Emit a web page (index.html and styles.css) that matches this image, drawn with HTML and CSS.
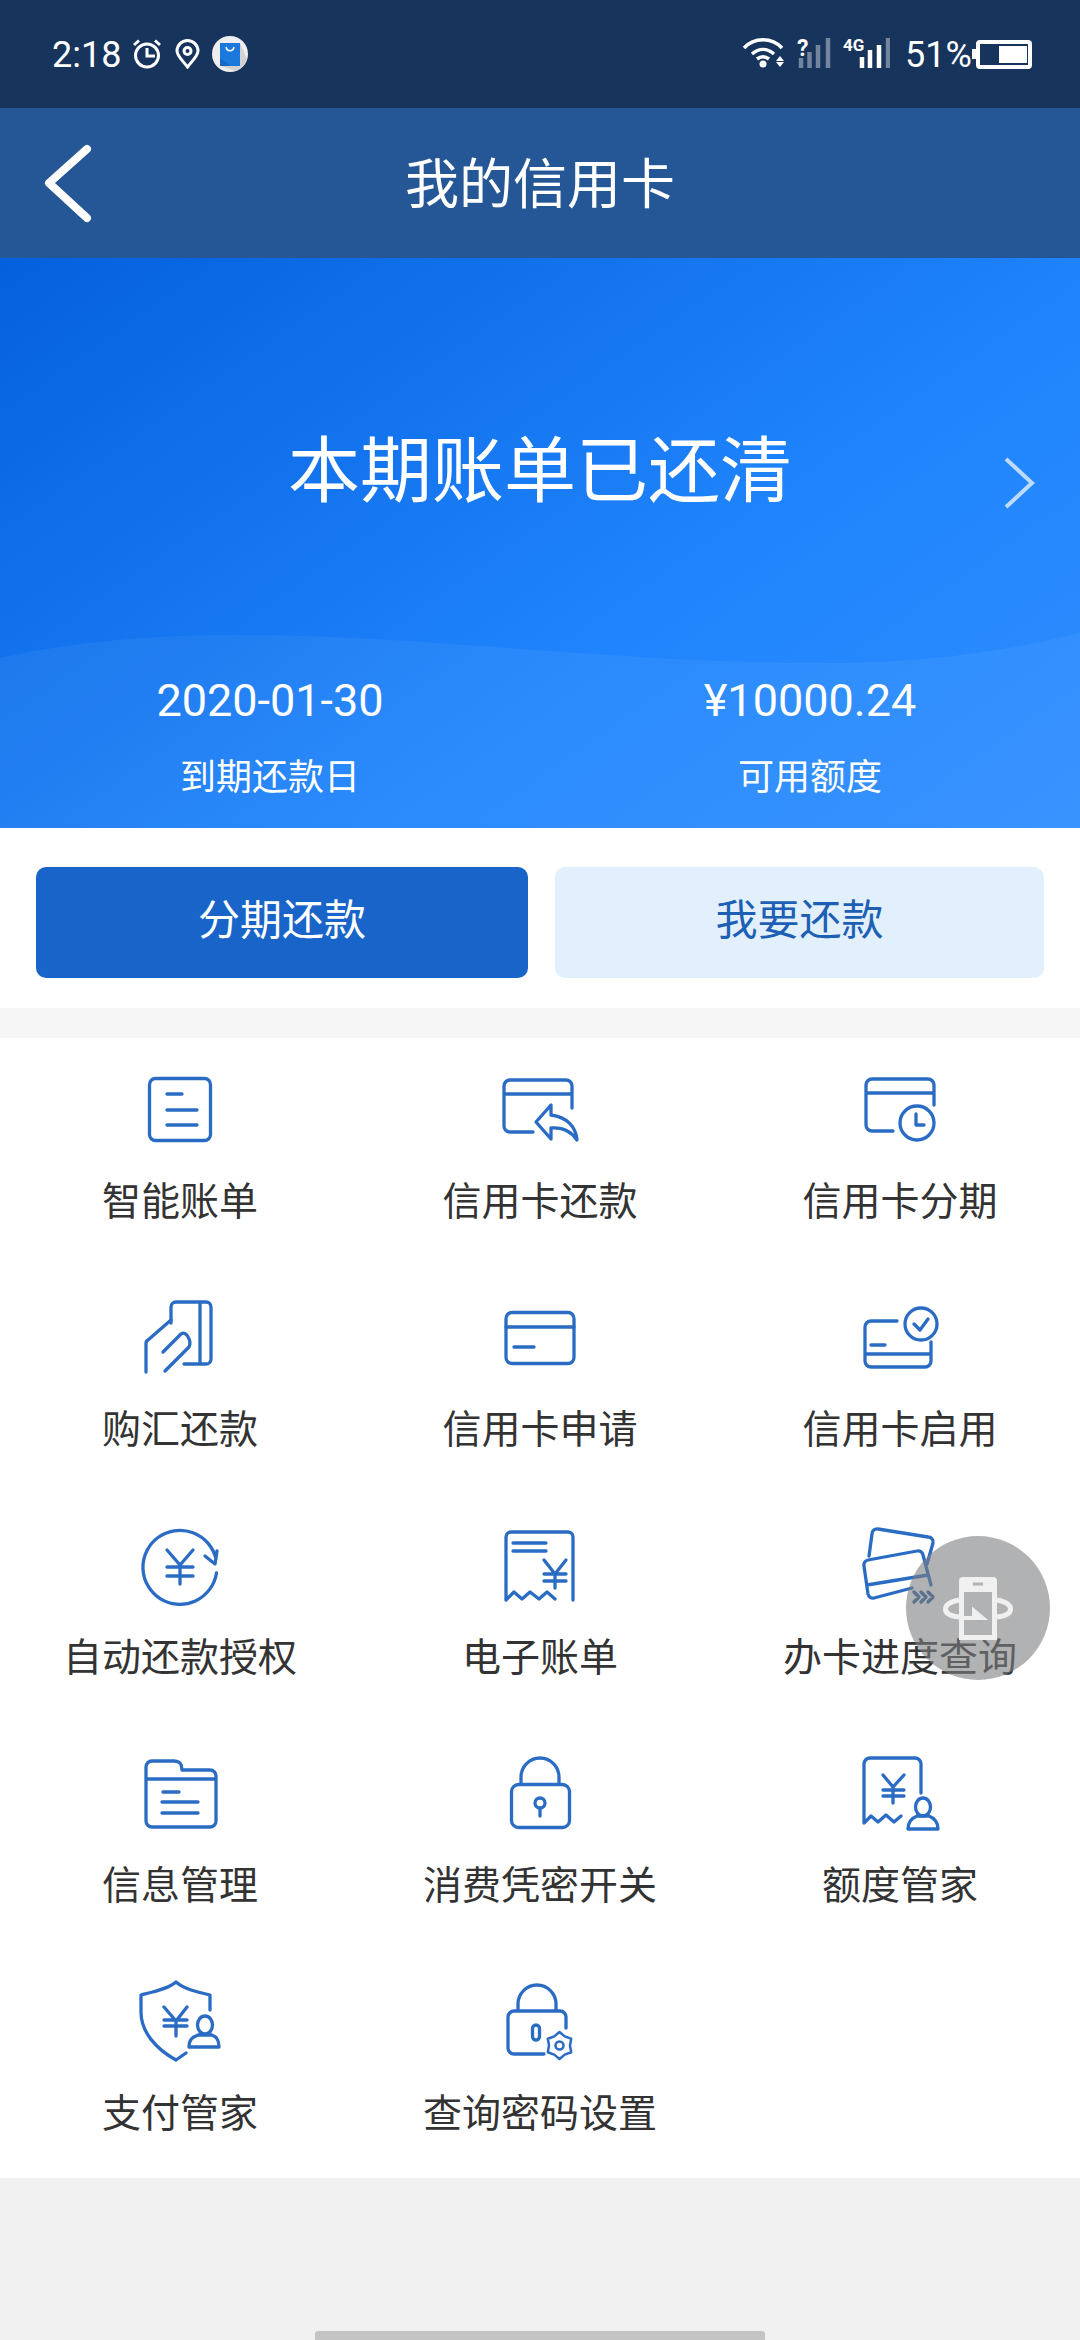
FILE: index.html
```html
<!DOCTYPE html>
<html lang="zh-CN">
<head>
<meta charset="UTF-8">
<meta name="viewport" content="width=device-width, initial-scale=1.0">
<title>我的信用卡</title>
<link rel="stylesheet" href="styles.css">
</head>
<body>
<div class="page">

    <div class="status-bar">
        <div class="status-left">
            <span class="status-time">2:18</span>
            <svg class="st-alarm" viewBox="0 0 30 30"><circle cx="15" cy="16.500" r="11.500"/><path d="M15 9v8h8M2 6l5-4.500M28 6l-5-4.500"/></svg>
            <svg class="st-pin" viewBox="0 0 25 30"><path d="M12.500 28C8 22 2 17 2 12a10.500 10.500 0 0 1 21 0C23 17 17 22 12.500 28Z"/><circle cx="12.500" cy="12" r="3.500"/></svg>
            <svg class="st-app" viewBox="0 0 36 36"><circle class="app-bg" cx="18" cy="18" r="18"/><path class="app-long" d="M28 7l7 16a18 18 0 0 1-11 12L8 30Z"/><path class="app-bag" d="M8 7h20v23H8Z"/><path class="app-shade" d="M8 22l11 8H8Z"/><path class="app-handle" d="M14 11c1 5 7 5 8 0"/></svg>
        </div>
        <div class="status-right">
            <svg class="st-net" viewBox="0 0 150 40">
                <path class="wifi-arc" d="M4 14C14 3 32 3 42 14M12 20c7-6 15-6 22 0M17 25c4-3 8-3 12 0"/>
                <circle class="solid" cx="23" cy="30" r="3.500"/>
                <path class="solid" d="M40 22l4 5h-8ZM40 33l4-5h-8Z"/>
                <path class="bar-off" d="M61 34V24M69.500 34V18M78 34V11M88 34V4"/>
                <path class="bar-on" d="M122 34V23M130 34V16M139 34V11"/>
                <path class="bar-off" d="M148 34V4"/>
                <text class="net-q" x="57" y="22">?</text>
                <text class="net-4g" x="103" y="17">4G</text>
            </svg>
            <span class="status-batt">51%</span>
            <div class="battery"><div class="battery-fill"></div></div>
        </div>
    </div>

    <div class="nav-bar">
        <svg class="back" viewBox="0 0 50 80"><path d="M45 6 7 40l38 35"/></svg>
        <span>我的信用卡</span>
    </div>

    <div class="hero">
        <svg class="wave" viewBox="0 0 1080 570"><path d="M0 400C80 382 160 377 241 377 420 377 620 405 826 405 930 405 1010 392 1080 375V570H0Z"/></svg>
        <svg class="hero-arrow" viewBox="0 0 32 54"><path d="M3 3l26 24L3 51"/></svg>
        <h1 class="hero-title">本期账单已还清</h1>
        <div class="hero-stats">
            <div class="stat">
                <div class="stat-value">2020-01-30</div>
                <div class="stat-label">到期还款日</div>
            </div>
            <div class="stat">
                <div class="stat-value">¥10000.24</div>
                <div class="stat-label">可用额度</div>
            </div>
        </div>
    </div>

    <div class="actions">
        <div class="btn btn-primary">分期还款</div>
        <div class="btn btn-light">我要还款</div>
    </div>

    <div class="gap"></div>

    <div class="menu">
        <div class="cell">
            <svg class="icon" viewBox="0 0 90 90"><rect x="14.500" y="13.500" width="61" height="62" rx="6"/><path d="M32 29h15M32 45h30M32 60h30"/></svg>
            <div class="cell-label">智能账单</div>
        </div>
        <div class="cell">
            <svg class="icon" viewBox="0 0 90 90"><path d="M38 67H15a6 6 0 0 1-6-6V21a6 6 0 0 1 6-6h56a6 6 0 0 1 6 6v22M9 29h68"/><path d="M56 40v10c16 2 25 12 26 25-6-9-14-13-26-12v11L41 57Z"/></svg>
            <div class="cell-label">信用卡还款</div>
        </div>
        <div class="cell">
            <svg class="icon" viewBox="0 0 90 90"><path d="M38 66H17a6 6 0 0 1-6-6V20a6 6 0 0 1 6-6h56a6 6 0 0 1 6 6v20M11 28h68"/><circle cx="62" cy="58" r="17"/><path d="M61 49v11h8"/></svg>
            <div class="cell-label">信用卡分期</div>
        </div>

        <div class="cell">
            <svg class="icon" viewBox="0 0 90 90"><path d="M36 30V14a5 5 0 0 1 5-5h30a5 5 0 0 1 5 5v52a5 5 0 0 1-5 5H49M65 9v62"/><path d="M36 27 13 47a4 4 0 0 0-2 4v28M30 78 54 54c3-6-3-17-8-13L28 59"/></svg>
            <div class="cell-label">购汇还款</div>
        </div>
        <div class="cell">
            <svg class="icon" viewBox="0 0 90 90"><rect x="11" y="19.500" width="68" height="51" rx="6"/><path d="M11 34h68M19 54h20"/></svg>
            <div class="cell-label">信用卡申请</div>
        </div>
        <div class="cell">
            <svg class="icon" viewBox="0 0 90 90"><path d="M42 28H16a6 6 0 0 0-6 6v34a6 6 0 0 0 6 6h54a6 6 0 0 0 6-6V49M10 61h66M16 52h14"/><circle cx="66" cy="31" r="16"/><path d="M59 31l6 6 8-11"/></svg>
            <div class="cell-label">信用卡启用</div>
        </div>

        <div class="cell">
            <svg class="icon" viewBox="0 0 90 90"><path d="M81.500 52A37 37 0 1 1 81 38M70 35l10 8 2-13"/><path d="M32 29l13 15 13-15M32 46h26M32 55h26M45 44v19"/></svg>
            <div class="cell-label">自动还款授权</div>
        </div>
        <div class="cell">
            <svg class="icon" viewBox="0 0 90 90"><path d="M11 79V16a5 5 0 0 1 5-5h57a5 5 0 0 1 5 5v63M11 79l8-8 8 7 8-7 9 7 8-7 8 7"/><path d="M18 22h33M18 30h33M49 39l11 14 11-14M49 53h22M49 60h22M60 53v14"/></svg>
            <div class="cell-label">电子账单</div>
        </div>
        <div class="cell">
            <svg class="icon" viewBox="0 0 90 90"><path d="M14 35l3-22a5 5 0 0 1 6-5l50 8a5 5 0 0 1 5 6l-6 21"/><path d="M57 67 19 77a5 5 0 0 1-6-4L9 45a5 5 0 0 1 4-6l49-9a5 5 0 0 1 6 4l8 30M12 64l61-10"/><path class="chev" d="M59 71l5 5-5 5M66 71l5 5-5 5M73 71l5 5-5 5"/></svg>
            <div class="cell-label">办卡进度查询</div>
        </div>

        <div class="cell">
            <svg class="icon" viewBox="0 0 90 90"><path d="M11 30V18a6 6 0 0 1 6-6h22c6 0 8 3 8 9h28a6 6 0 0 1 6 6v45a6 6 0 0 1-6 6H17a6 6 0 0 1-6-6Zm0 0h70M28 43h16M27 53h36M27 64h36"/></svg>
            <div class="cell-label">信息管理</div>
        </div>
        <div class="cell">
            <svg class="icon" viewBox="0 0 90 90"><rect x="16.500" y="35.500" width="58" height="43" rx="7"/><path d="M26 35V28a19 19 0 0 1 38 0v7M45 59v8"/><circle cx="45" cy="54" r="5"/></svg>
            <div class="cell-label">消费凭密开关</div>
        </div>
        <div class="cell">
            <svg class="icon" viewBox="0 0 90 90"><path d="M66 44V15a6 6 0 0 0-6-6H15a6 6 0 0 0-6 6v59l7-7 7 6 8-7 8 7 7-6"/><path d="M28 26l10 12 11-12M28 41h21M28 47h21M38 38v16"/><ellipse cx="68" cy="58" rx="7.500" ry="9"/><path d="M53 80c0-8 4-11 9-13h12c5 2 9 5 9 13Z"/></svg>
            <div class="cell-label">额度管家</div>
        </div>

        <div class="cell">
            <svg class="icon" viewBox="0 0 90 90"><path d="M75 33V18C62 15 49 12 41 5 33 12 18 15 6 18v17c0 20 15 37 35 48l10-7"/><path d="M29 30l12 14 11-14M29 43h23M29 49h23M41 44v15"/><ellipse cx="70" cy="48" rx="7.500" ry="9"/><path d="M54 70c0-8 4-10 9-12h14c5 2 7 5 7 12Z"/></svg>
            <div class="cell-label">支付管家</div>
        </div>
        <div class="cell">
            <svg class="icon" viewBox="0 0 90 90"><path d="M49 77H19a6 6 0 0 1-6-6V40a6 6 0 0 1 6-6h46a6 6 0 0 1 6 6v11M23 34v-7a19 19 0 0 1 38 0v7"/><rect x="37.500" y="48" width="7" height="15" rx="3.500"/><path class="gear" d="M64.500 55l5.250 4.400 6.450 2.350L75 68.500l1.200 6.750-6.450 2.350L64.500 82l-5.250-4.400-6.450-2.350L54 68.500l-1.200-6.750 6.450-2.350Z"/><circle class="gear" cx="64.500" cy="68.500" r="4"/></svg>
            <div class="cell-label">查询密码设置</div>
        </div>
    </div>

    <div class="footer"><div class="home-bar"></div></div>

    <div class="float-btn">
        <svg viewBox="0 0 144 144">
            <path class="fb-ring" d="M53 64C43 66 39.500 69 39.500 73s3.500 7 13.500 8M91 64c10 2 13.500 5 13.500 9s-3.500 7-13.500 8"/>
            <path class="fb-phone" d="M53 45a4 4 0 0 1 4-4h30a4 4 0 0 1 4 4v59H53Zm5 11v43h28V56Z"/>
            <path class="fb-speaker" d="M67 48h10"/>
            <path class="fb-arrow" d="M66 70.500 82 84H58v-4h8Z"/>
        </svg>
    </div>

</div>
</body>
</html>
```

FILE: styles.css
```css
* {
    box-sizing: border-box;
}
body {
    margin: 0;
    font-family: Roboto, "Noto Sans CJK SC", sans-serif;
}
.page {
    position: relative;
    width: 1080px;
    height: 2340px;
    overflow: hidden;
    display: flex;
    flex-direction: column;
    background: #f1f1f1;
}

/* status bar */
.status-bar {
    height: 108px;
    flex: none;
    padding: 0 48px 0 52px;
    display: flex;
    justify-content: space-between;
    align-items: center;
    background: #17345d;
    color: #fff;
}
.status-left, .status-right {
    display: flex;
    align-items: center;
}
.status-time {
    font-size: 36px;
    width: 80px;
    line-height: 36px;
    padding-top: 2px;
}
.status-bar svg {
    fill: none;
    stroke: #fff;
    stroke-width: 3;
}
.st-alarm {
    width: 30px;
    height: 30px;
    margin-right: 13px;
}
.st-pin {
    width: 25px;
    height: 30px;
    margin-right: 12px;
}
.st-app {
    width: 36px;
    height: 36px;
}
.status-bar .app-bg {
    fill: #eeeeee;
    stroke: none;
}
.status-bar .app-long {
    fill: #d2d2d2;
    stroke: none;
}
.status-bar .app-bag {
    fill: #1b79dd;
    stroke: none;
}
.status-bar .app-shade {
    fill: #1668c4;
    stroke: none;
}
.status-bar .app-handle {
    stroke-width: 1.500;
}
.st-net {
    width: 150px;
    height: 40px;
    margin-right: 15px;
}
.status-bar .wifi-arc {
    stroke-width: 3.500;
}
.status-bar .solid {
    fill: #fff;
    stroke: none;
}
.status-bar .bar-on {
    stroke-width: 4.500;
}
.status-bar .bar-off {
    stroke: rgba(255, 255, 255, 0.4);
    stroke-width: 4.500;
}
.status-bar .net-q, .status-bar .net-4g {
    fill: #fff;
    stroke: none;
    font-weight: 700;
}
.net-q {
    font-size: 23px;
}
.net-4g {
    font-size: 17px;
}
.status-batt {
    font-size: 36px;
    line-height: 36px;
    width: 71px;
    padding-top: 2px;
}
.battery {
    position: relative;
    width: 56px;
    height: 29px;
    border: 4px solid #fff;
    border-radius: 4px;
    padding: 2px 1px 2px 19px;
}
.battery::before {
    content: "";
    position: absolute;
    left: -8px;
    top: 5px;
    width: 4px;
    height: 10px;
    background: #fff;
}
.battery-fill {
    height: 100%;
    background: #fff;
}

/* nav */
.nav-bar {
    height: 150px;
    flex: none;
    position: relative;
    display: flex;
    align-items: center;
    justify-content: center;
    padding-bottom: 6px;
    background: #255695;
    color: #fff;
    font-size: 54px;
}
.back {
    position: absolute;
    left: 42px;
    top: 35px;
    width: 50px;
    height: 80px;
    fill: none;
    stroke: #fff;
    stroke-width: 8;
    stroke-linecap: round;
    stroke-linejoin: round;
}

/* hero */
.hero {
    height: 570px;
    flex: none;
    position: relative;
    background: linear-gradient(145deg, #0560dd 0%, #1f84fc 60%, #2f8eff 100%);
    color: #fff;
    text-align: center;
}
.wave {
    position: absolute;
    left: 0;
    top: 0;
    width: 1080px;
    height: 570px;
    fill: rgba(255, 255, 255, 0.05);
}
.hero-arrow {
    position: absolute;
    left: 1003px;
    top: 198px;
    width: 32px;
    height: 54px;
    fill: none;
    stroke: rgba(255, 255, 255, 0.7);
    stroke-width: 4;
}
.hero-title {
    position: relative;
    margin: 164px 0 149px;
    font-size: 72px;
    font-weight: 400;
    line-height: 100px;
}
.hero-stats {
    position: relative;
    display: grid;
    grid-template-columns: 1fr 1fr;
}
.stat-value {
    font-size: 45px;
    line-height: 60px;
}
.stat-label {
    margin-top: 22px;
    font-size: 36px;
    line-height: 50px;
}

/* buttons */
.actions {
    flex: none;
    padding: 39px 0 30px 36px;
    display: grid;
    grid-template-columns: 492px 489px;
    gap: 27px;
    background: #fff;
}
.btn {
    height: 111px;
    border-radius: 10px;
    display: flex;
    align-items: center;
    justify-content: center;
    font-size: 42px;
    padding-bottom: 12px;
}
.btn-primary {
    background: #1864c8;
    color: #fff;
}
.btn-light {
    background: #e2effc;
    color: #1c5fb4;
}
.gap {
    height: 30px;
    flex: none;
    background: #f5f5f5;
}

/* menu grid */
.menu {
    flex: none;
    display: grid;
    grid-template-columns: repeat(3, 360px);
    grid-auto-rows: 228px;
    height: 1140px;
    background: #fff;
}
.cell {
    padding-top: 27px;
    display: flex;
    flex-direction: column;
    align-items: center;
}
.icon {
    width: 90px;
    height: 90px;
    fill: none;
    stroke: #2a6cc4;
    stroke-width: 3.300;
    stroke-linecap: round;
    stroke-linejoin: round;
}
.icon .chev {
    stroke: #2b5fa6;
}
.icon .gear {
    stroke-width: 2.500;
}
.cell-label {
    margin-top: 22px;
    font-size: 39px;
    line-height: 50px;
    color: #333;
    white-space: nowrap;
}

/* bottom */
.footer {
    flex: 1;
    display: flex;
    align-items: flex-end;
    justify-content: center;
    background: #f1f1f1;
}
.home-bar {
    width: 450px;
    height: 9px;
    background: #c4c4c4;
    border-radius: 3px 3px 0 0;
}

/* floating button */
.float-btn {
    position: absolute;
    left: 906px;
    top: 1536px;
    width: 144px;
    height: 144px;
    border-radius: 50%;
    background: rgba(125, 127, 129, 0.6);
}
.float-btn svg {
    display: block;
    width: 144px;
    height: 144px;
    fill: none;
}
.fb-ring {
    stroke: #f0f0f0;
    stroke-width: 5;
}
.fb-phone {
    fill: #f0f0f0;
    fill-rule: evenodd;
}
.fb-speaker {
    stroke: #b0b2b3;
    stroke-width: 3;
}
.fb-arrow {
    fill: #f0f0f0;
}
```
